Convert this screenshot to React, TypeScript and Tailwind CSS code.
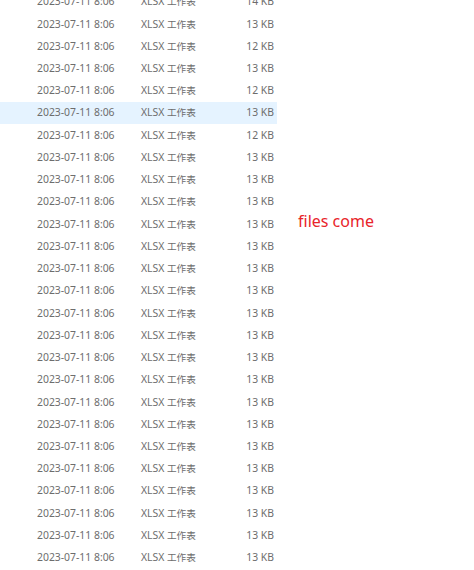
import React from 'react'

const sizes = [14, 13, 12, 13, 12, 13, 12, 13, 13, 13, 13, 13, 13, 13, 13, 13, 13, 13, 13, 13, 13, 13, 13, 13, 13, 13]

export default function App() {
  return (
    <div
      className="relative w-[474px] h-[570px] overflow-hidden bg-white"
      style={{ fontFamily: '"Noto Sans", "Noto Sans CJK SC", sans-serif' }}
    >
      <div className="-mt-[9px] flex flex-col">
        {sizes.map((s, i) => (
          <div
            key={i}
            className={`flex items-center h-[22.24px] w-[277px] text-[10.4px] text-[#6d6d6d] ${
              i === 5 ? 'bg-[#e5f3ff]' : ''
            }`}
          >
            <span className="ml-[37px] w-[104px] whitespace-nowrap">2023-07-11 8:06</span>
            <span className="w-[80px] whitespace-nowrap">
              XLSX <span className="text-[9.6px]">工作表</span>
            </span>
            <span className="flex-1 text-right pr-[3px] whitespace-nowrap">{s} KB</span>
          </div>
        ))}
      </div>
      <div className="absolute left-[298px] top-[209px] text-[16px] text-[#e8242a]">files come</div>
    </div>
  )
}
